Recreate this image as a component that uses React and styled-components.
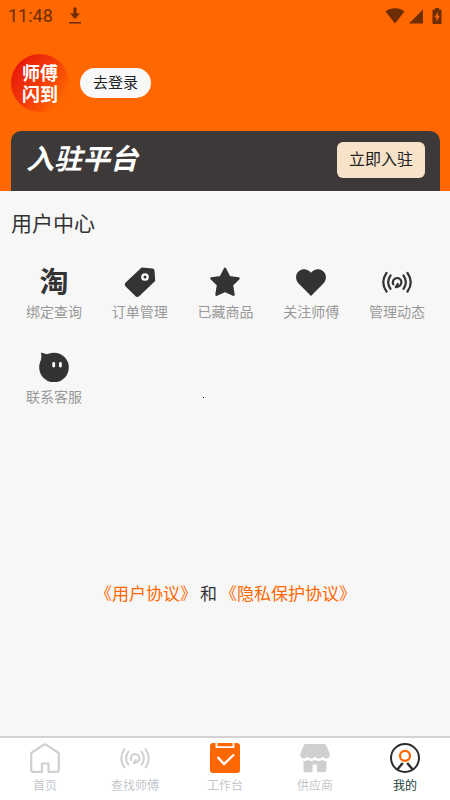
import React from "react";
import styled, { createGlobalStyle } from "styled-components";

const GlobalStyle = createGlobalStyle`
  * { box-sizing: border-box; }
  body {
    margin: 0;
    background: #f7f7f7;
    font-family: Roboto, "Noto Sans CJK SC", sans-serif;
    color: #333;
  }
  button { font-family: inherit; border: 0; padding: 0; cursor: pointer; }
  svg { display: block; flex: none; }
`;

const Page = styled.div`
  display: flex;
  flex-direction: column;
  min-height: 100vh;
`;

const Header = styled.header`
  background: #ff6700;
`;

const StatusBar = styled.div`
  display: flex;
  align-items: center;
  justify-content: space-between;
  height: 32px;
  padding: 0 8px;
  color: #6e2d04;
`;

const StatusGroup = styled.div`
  display: flex;
  align-items: center;
  gap: ${(p) => p.$gap}px;
`;

const Clock = styled.time`
  font-size: 18px;
  line-height: 32px;
`;

const Profile = styled.div`
  display: flex;
  align-items: center;
  gap: 11px;
  padding: 22px 11px 19px;
`;

const Logo = styled.div`
  display: flex;
  flex-direction: column;
  align-items: center;
  justify-content: center;
  width: 58px;
  height: 58px;
  padding-top: 2px;
  border-radius: 50%;
  background: linear-gradient(125deg, #e81c0c 15%, #f43c08 50%, #ff6700 85%);
  color: #fff;
  font-size: 18px;
  font-weight: 700;
  line-height: 21px;
`;

const LoginButton = styled.button`
  height: 30px;
  padding: 1px 13px 0;
  border-radius: 15px;
  background: #f8f8f8;
  color: #222;
  font-size: 15px;
  line-height: 29px;
`;

const Banner = styled.section`
  display: flex;
  align-items: center;
  justify-content: space-between;
  height: 60px;
  margin: 0 10px 0 11px;
  padding: 0 15px 2px;
  border-radius: 10px 10px 0 0;
  background: #3d3938;
`;

const BannerTitle = styled.h1`
  margin: 0;
  color: #fff;
  font-size: 28px;
  font-style: italic;
  font-weight: 700;
  line-height: 36px;
`;

const JoinButton = styled.button`
  height: 36px;
  padding: 0 12px;
  border-radius: 6px;
  background: #f7e2ca;
  color: #222;
  font-size: 16px;
  line-height: 36px;
`;

const Main = styled.main`
  position: relative;
  flex: 1;
  display: flex;
  flex-direction: column;
  padding: 17px 10px 0 11px;
`;

const SectionTitle = styled.h2`
  margin: 0;
  font-size: 21px;
  font-weight: 400;
  line-height: 32px;
`;

const MenuGrid = styled.div`
  display: grid;
  grid-template-columns: repeat(5, 1fr);
  row-gap: 30px;
  margin-top: 27px;
`;

const MenuItem = styled.button`
  display: flex;
  flex-direction: column;
  align-items: center;
  gap: 5px;
  background: none;
  color: #999;
  font-size: 14px;
  line-height: 20px;
  white-space: nowrap;
`;

const TaoMark = styled.span`
  height: 30px;
  color: #333;
  font-size: 29px;
  font-weight: 700;
  line-height: 32px;
`;

const Speck = styled.i`
  position: absolute;
  left: 45%;
  top: 206px;
  width: 1px;
  height: 1px;
  background: #000;
`;

const Agreements = styled.p`
  display: flex;
  justify-content: center;
  gap: 3px;
  margin: auto 0 130px;
  font-size: 17px;
  line-height: 24px;
  white-space: nowrap;
`;

const AgreementLink = styled.a`
  color: #ff6700;
  text-decoration: none;
`;

const TabBar = styled.nav`
  display: grid;
  grid-template-columns: repeat(5, 1fr);
  padding: 5px 0;
  border-top: 2px solid #d4d4d4;
  background: #fff;
`;

const Tab = styled.button`
  display: flex;
  flex-direction: column;
  align-items: center;
  gap: 4px;
  background: none;
  color: ${(p) => (p.$active ? "#173d35" : "#c3c7cc")};
  font-size: 12px;
  line-height: 18px;
`;

const DownloadIcon = () => (
  <svg width="14" height="18" viewBox="0 0 14 18" fill="currentColor" aria-hidden="true">
    <path d="M5.500 .5h3v6h3.500L7 12 2 6.500h3.500zM1 15h12v1.600H1z" />
  </svg>
);

const WifiIcon = () => (
  <svg width="20" height="16" viewBox="0 0 20 16" fill="currentColor" aria-hidden="true">
    <path d="M.5 3.500Q4.500.3 10 .3t9.500 3.200L10 15.500z" />
  </svg>
);

const SignalIcon = () => (
  <svg width="14" height="16" viewBox="0 0 14 16" fill="currentColor" aria-hidden="true">
    <path d="M14 1.500v14H0z" />
  </svg>
);

const BatteryIcon = () => (
  <svg width="10" height="18" viewBox="0 0 10 18" aria-hidden="true">
    <path fill="currentColor" d="M3 1h4v1.500h1.500Q9.500 2.500 9.500 3.500V16q0 1-1 1h-7q-1 0-1-1V3.500q0-1 1-1H3z" />
    <path fill="#ff6700" d="M5.800 4.500 2.500 10.500h2v4.500l3.200-6.200h-2z" />
  </svg>
);

const TagIcon = () => (
  <svg width="32" height="30" viewBox="0 0 32 30" aria-hidden="true">
    <path
      fill="#333"
      stroke="#333"
      strokeWidth="2"
      strokeLinejoin="round"
      d="M18 1.500 28.500 2.500Q29.500 2.700 29.600 4L30.200 13.500 14.500 28.500Q13.300 29.400 12.100 28.400L2.300 18.700Q1.200 17.400 2.400 16.200Z"
    />
    <circle cx="21" cy="10" r="2.700" fill="#333" stroke="#fff" strokeWidth="2.300" />
  </svg>
);

const StarIcon = () => (
  <svg width="32" height="30" viewBox="0 0 32 30" aria-hidden="true">
    <path
      fill="#333"
      stroke="#333"
      strokeWidth="2.400"
      strokeLinejoin="round"
      d="m16 1.800 4.200 8.300 9.400 1.300-6.600 6.600 1.500 9.700L16 23.800 7.500 27.700l1.500-9.700-6.600-6.600 9.400-1.300z"
    />
  </svg>
);

const HeartIcon = () => (
  <svg width="32" height="30" viewBox="0 0 32 30" aria-hidden="true">
    <path
      fill="#333"
      d="M16 29 3.600 16.500C-1 11.500 1 4 7 2.400c3.500-.9 6.700.5 9 3.400 2.300-2.900 5.500-4.300 9-3.400 6 1.600 8 9.100 3.400 14.100z"
    />
  </svg>
);

const BroadcastIcon = ({ color, width }) => (
  <svg
    width="30"
    height="30"
    viewBox="0 0 30 30"
    fill="none"
    stroke={color}
    strokeWidth={width}
    strokeLinecap="round"
    aria-hidden="true"
  >
    <path d="M4.500 6Q-2 15.200 4.500 24.500M8.500 8.500Q3.800 15.200 8.500 21.800M25.500 6Q32 15.200 25.500 24.500M21.500 8.500Q26.200 15.200 21.500 21.800" />
    <path d="M11.300 17.300A4.300 4.300 0 1 1 16.500 19.400L13.800 20.200M13.800 20.200 15.800 17" />
  </svg>
);

const ServiceIcon = () => (
  <svg width="32" height="30" viewBox="0 0 32 30" aria-hidden="true">
    <circle cx="16" cy="15.500" r="14.800" fill="#333" />
    <path fill="#333" d="M3 .5 11.500 3 2.500 10Q4.200 5 3 .5Z" />
    <rect x="14.300" y="10" width="2.800" height="5.500" rx="1.400" fill="#fff" />
    <rect x="21" y="10" width="2.800" height="5.500" rx="1.400" fill="#fff" />
  </svg>
);

const HomeIcon = () => (
  <svg
    width="30"
    height="30"
    viewBox="0 0 30 30"
    fill="none"
    stroke="#cfcfcf"
    strokeWidth="2.200"
    strokeLinejoin="round"
    aria-hidden="true"
  >
    <path d="M1.200 10.800Q1.200 10 2 9.500L14 1.700Q15 1.100 16 1.700L28 9.500Q28.800 10 28.800 10.800V27Q28.800 28.800 27 28.800H18.500V20.500H12V28.800H3Q1.200 28.800 1.200 27Z" />
  </svg>
);

const WorkbenchIcon = () => (
  <svg width="30" height="30" viewBox="0 0 30 30" fill="none" aria-hidden="true">
    <rect width="30" height="30" rx="3" fill="#ff6700" />
    <path stroke="#fff" strokeWidth="1.800" d="M6.500 0v4.200h17V0" />
    <path stroke="#fff" strokeWidth="2.400" d="m7.500 14 6.500 7 10-9.500" />
  </svg>
);

const ShopIcon = () => (
  <svg width="30" height="30" viewBox="0 0 30 30" fill="#cfcfcf" aria-hidden="true">
    <path d="M6 1h18q1.500 0 2.200 1.300L29.800 11q.3 4-3.300 4.400-2.500.1-3.800-2-1.300 2.100-3.900 2.100T15 13.500q-1.300 2-3.800 2t-3.900-2.100q-1.300 2.100-3.800 2Q-.1 15 .2 11L3.800 2.300Q4.500 1 6 1Z" />
    <path d="M3.500 18q3 .2 4.300-1.200 3 2.200 7.200.3 4.200 1.900 7.200-.3Q23.500 18.200 26.500 18v9.200q0 2-2 2H17V21.500h-4.500v7.700H5.500q-2 0-2-2Z" />
  </svg>
);

const MineIcon = () => (
  <svg width="30" height="30" viewBox="0 0 30 30" fill="none" aria-hidden="true">
    <circle cx="15" cy="15" r="14" stroke="#2e2b2b" strokeWidth="2" />
    <circle cx="15" cy="12.800" r="5" stroke="#ff6700" strokeWidth="2.300" />
    <path stroke="#2e2b2b" strokeWidth="2.400" d="m12.800 20-5.500 6.500M17.200 20l5.500 6.500" />
  </svg>
);

const menuItems = [
  { label: "绑定查询", icon: <TaoMark aria-hidden="true">淘</TaoMark> },
  { label: "订单管理", icon: <TagIcon /> },
  { label: "已藏商品", icon: <StarIcon /> },
  { label: "关注师傅", icon: <HeartIcon /> },
  { label: "管理动态", icon: <BroadcastIcon color="#333" width={2.2} /> },
  { label: "联系客服", icon: <ServiceIcon /> },
];

const tabs = [
  { label: "首页", icon: <HomeIcon /> },
  { label: "查找师傅", icon: <BroadcastIcon color="#cfcfcf" width={2} /> },
  { label: "工作台", icon: <WorkbenchIcon /> },
  { label: "供应商", icon: <ShopIcon /> },
  { label: "我的", icon: <MineIcon />, active: true },
];

export default function App() {
  return (
    <Page>
      <GlobalStyle />
      <Header>
        <StatusBar>
          <StatusGroup $gap={15}>
            <Clock>11:48</Clock>
            <DownloadIcon />
          </StatusGroup>
          <StatusGroup $gap={4}>
            <WifiIcon />
            <StatusGroup $gap={9}>
              <SignalIcon />
              <BatteryIcon />
            </StatusGroup>
          </StatusGroup>
        </StatusBar>
        <Profile>
          <Logo>
            <span>师傅</span>
            <span>闪到</span>
          </Logo>
          <LoginButton type="button">去登录</LoginButton>
        </Profile>
        <Banner>
          <BannerTitle>入驻平台</BannerTitle>
          <JoinButton type="button">立即入驻</JoinButton>
        </Banner>
      </Header>
      <Main>
        <SectionTitle>用户中心</SectionTitle>
        <MenuGrid>
          {menuItems.map((item) => (
            <MenuItem key={item.label} type="button">
              {item.icon}
              {item.label}
            </MenuItem>
          ))}
        </MenuGrid>
        <Speck />
        <Agreements>
          <AgreementLink href="#terms">《用户协议》</AgreementLink>
          <span>和</span>
          <AgreementLink href="#privacy">《隐私保护协议》</AgreementLink>
        </Agreements>
      </Main>
      <TabBar>
        {tabs.map((tab) => (
          <Tab key={tab.label} type="button" $active={tab.active} aria-current={tab.active ? "page" : undefined}>
            {tab.icon}
            {tab.label}
          </Tab>
        ))}
      </TabBar>
    </Page>
  );
}
